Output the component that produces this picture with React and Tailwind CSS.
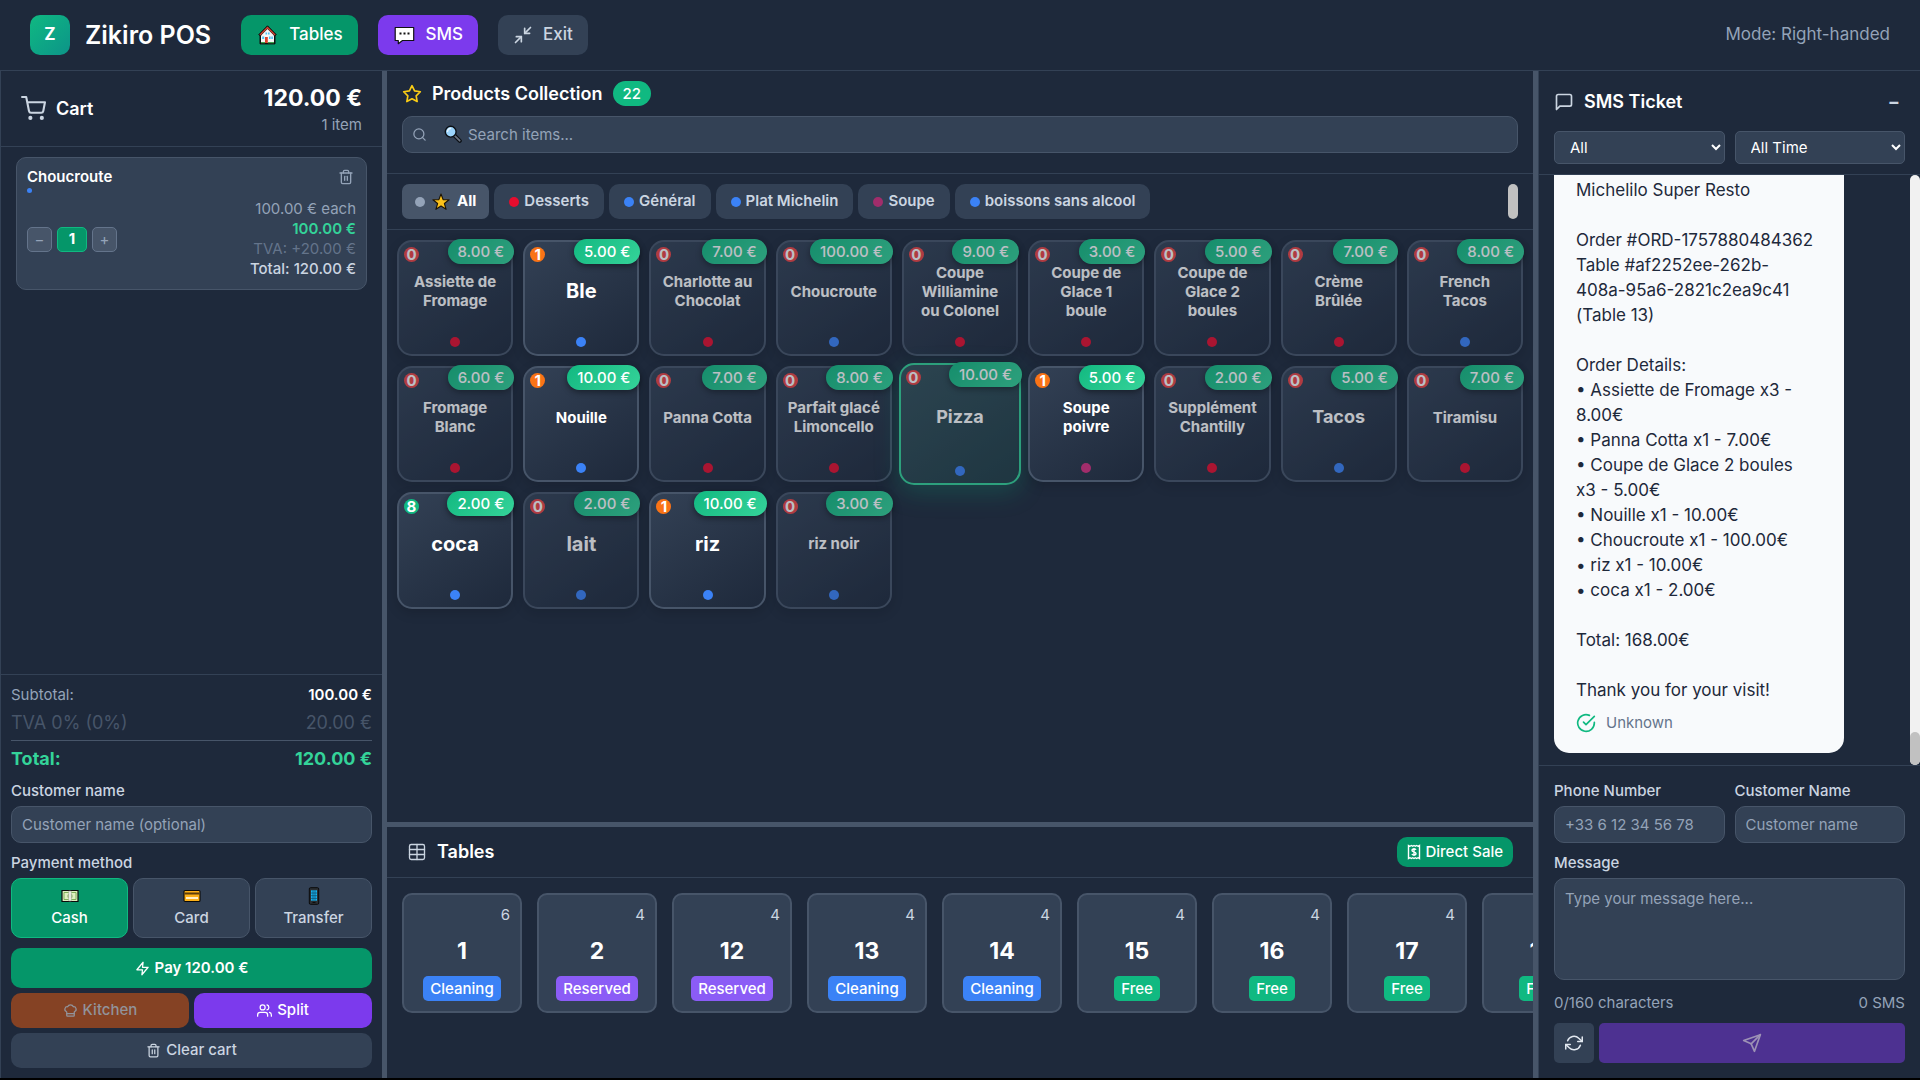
import {
  FiMinimize2, FiShoppingCart, FiTrash2, FiStar, FiSearch, FiZap, FiUsers,
  FiMessageSquare, FiCheckCircle, FiRefreshCw, FiSend,
} from 'react-icons/fi';
import { ChefHat, Table } from 'lucide-react';

const RED = 'bg-[#e60d2e]';
const BLUE = 'bg-[#3b82f6]';
const PLUM = 'bg-[#a12d6b]';

const CATEGORIES = [
  { name: 'Desserts', dot: RED },
  { name: 'Général', dot: BLUE },
  { name: 'Plat Michelin', dot: BLUE },
  { name: 'Soupe', dot: PLUM },
  { name: 'boissons sans alcool', dot: BLUE },
];

const PRODUCTS = [
  { name: 'Assiette de Fromage', price: '8.00 €', stock: 0, dot: RED },
  { name: 'Ble', price: '5.00 €', stock: 1, dot: BLUE },
  { name: 'Charlotte au Chocolat', price: '7.00 €', stock: 0, dot: RED },
  { name: 'Choucroute', price: '100.00 €', stock: 0, dot: BLUE },
  { name: 'Coupe Williamine ou Colonel', price: '9.00 €', stock: 0, dot: RED },
  { name: 'Coupe de Glace 1 boule', price: '3.00 €', stock: 0, dot: RED },
  { name: 'Coupe de Glace 2 boules', price: '5.00 €', stock: 0, dot: RED },
  { name: 'Crème Brûlée', price: '7.00 €', stock: 0, dot: RED },
  { name: 'French Tacos', price: '8.00 €', stock: 0, dot: BLUE },
  { name: 'Fromage Blanc', price: '6.00 €', stock: 0, dot: RED },
  { name: 'Nouille', price: '10.00 €', stock: 1, dot: BLUE },
  { name: 'Panna Cotta', price: '7.00 €', stock: 0, dot: RED },
  { name: 'Parfait glacé Limoncello', price: '8.00 €', stock: 0, dot: RED },
  { name: 'Pizza', price: '10.00 €', stock: 0, dot: BLUE, active: true },
  { name: 'Soupe poivre', price: '5.00 €', stock: 1, dot: PLUM },
  { name: 'Supplément Chantilly', price: '2.00 €', stock: 0, dot: RED },
  { name: 'Tacos', price: '5.00 €', stock: 0, dot: BLUE },
  { name: 'Tiramisu', price: '7.00 €', stock: 0, dot: RED },
  { name: 'coca', price: '2.00 €', stock: 8, dot: BLUE },
  { name: 'lait', price: '2.00 €', stock: 0, dot: BLUE },
  { name: 'riz', price: '10.00 €', stock: 1, dot: BLUE },
  { name: 'riz noir', price: '3.00 €', stock: 0, dot: BLUE },
];

const TABLES = [
  { number: 1, seats: 6, status: 'Cleaning' },
  { number: 2, seats: 4, status: 'Reserved' },
  { number: 12, seats: 4, status: 'Reserved' },
  { number: 13, seats: 4, status: 'Cleaning' },
  { number: 14, seats: 4, status: 'Cleaning' },
  { number: 15, seats: 4, status: 'Free' },
  { number: 16, seats: 4, status: 'Free' },
  { number: 17, seats: 4, status: 'Free' },
  { number: 18, seats: 4, status: 'Free' },
];

const STATUS_COLORS = {
  Cleaning: 'bg-[#3b82f6]',
  Reserved: 'bg-[#8b5cf6]',
  Free: 'bg-[#10b981]',
};

const TICKET = `Michelilo Super Resto

Order #ORD-1757880484362
Table #af2252ee-262b-408a-95a6-2821c2ea9c41 (Table 13)

Order Details:
• Assiette de Fromage x3 - 8.00€
• Panna Cotta x1 - 7.00€
• Coupe de Glace 2 boules x3 - 5.00€
• Nouille x1 - 10.00€
• Choucroute x1 - 100.00€
• riz x1 - 10.00€
• coca x1 - 2.00€

Total: 168.00€

Thank you for your visit!`;

const field = 'w-full rounded-[10px] border border-[#475569] bg-[#334155] px-[10px] text-[15px] placeholder:text-[#94a3b8]';
const fieldLabel = 'block text-[15px] leading-5 font-medium text-[#cbd5e1]';

/* ---------- small drawings ---------- */

function HouseIcon() {
  return (
    <svg width="23" height="20" viewBox="0 0 23 20" aria-hidden="true">
      <path d="M11.500.8 2.800 9.600l1.200 1.300v8h15v-8l1.200-1.300z" fill="#111" stroke="#111" strokeWidth="1" strokeLinejoin="round" />
      <path d="M11.500 4 5 10.500V18h13v-7.500z" fill="#f6f6f6" />
      <path d="M11.500 1.500 3.500 9.600l.9.9 7.100-7 7.100 7 .9-.9z" fill="#d8412e" />
      <path d="M9.500 7.500h1.600v2H9.500zM12 7.500h1.600v2H12zM6.200 11.500h2v2.500h-2zM13 11.500h1.600V14H13zM15.300 11.500h1.600V14h-1.600z" fill="#4cc2f1" />
      <path d="M9 12h2.800v6H9z" fill="#e0402c" />
      <path d="M5 17h4v1.300H5zM11.800 17H18v1.300h-6.200z" fill="#3fa34d" />
    </svg>
  );
}

function SpeechIcon() {
  return (
    <svg width="23" height="20" viewBox="0 0 23 20" aria-hidden="true">
      <path d="M2.200 2.500h18.500v13H9.500L5.300 18.700v-3.200H2.200z" fill="#fff" stroke="#111" strokeWidth="1.200" strokeLinejoin="round" />
      <path d="M6.500 7.500h2v2h-2zM10.500 7.500h2v2h-2zM14.500 7.500h2v2h-2z" fill="#111" />
    </svg>
  );
}

function StarEmoji() {
  return (
    <svg width="18" height="18" viewBox="0 0 18 18" aria-hidden="true">
      <path d="m9 1 2.100 5.600 6 .2-4.700 3.700 1.700 5.800L9 13l-5.100 3.300 1.700-5.800L.9 6.800l6-.2z" fill="#fcc21b" stroke="#1a1205" strokeWidth="1.100" strokeLinejoin="round" />
    </svg>
  );
}

function LensEmoji() {
  return (
    <svg width="18" height="18" viewBox="0 0 18 18" aria-hidden="true">
      <path d="m10.500 10.500 5.300 5.300" stroke="#0b0f14" strokeWidth="4" strokeLinecap="round" />
      <path d="m10.800 10.800 4.900 4.900" stroke="#6b7280" strokeWidth="1.800" strokeLinecap="round" />
      <circle cx="6.700" cy="6.700" r="5.400" fill="#9bd3fb" stroke="#0b0f14" strokeWidth="1.400" />
      <path d="M3.600 6.400a3 3 0 0 1 3-2.900" stroke="#e6f5ff" strokeWidth="1.300" fill="none" strokeLinecap="round" />
    </svg>
  );
}

function CashEmoji() {
  return (
    <svg width="18" height="18" viewBox="0 0 18 18" aria-hidden="true">
      <path d="M1 3.500h16v11H1z" fill="#dff0c0" stroke="#0a0a0a" strokeWidth="1.200" />
      <path d="M3 5.500h12v7H3z" fill="none" stroke="#7fae5a" />
      <circle cx="9" cy="9" r="2.600" fill="#8fae6e" />
      <path d="M7.700 4h2.600v10H7.700z" fill="#eef0ea" stroke="#9aa08f" strokeWidth=".5" />
    </svg>
  );
}

function CardEmoji() {
  return (
    <svg width="18" height="18" viewBox="0 0 18 18" aria-hidden="true">
      <rect x="1" y="3.500" width="16" height="11" rx="1" fill="#fcb017" stroke="#0a0a0a" strokeWidth="1.100" />
      <path d="M1.500 5.500h15v2h-15z" fill="#5b3c0b" />
      <path d="M3 10h12v2H3z" fill="#fff0c9" />
    </svg>
  );
}

function PhoneEmoji() {
  return (
    <svg width="18" height="18" viewBox="0 0 18 18" aria-hidden="true">
      <rect x="4.300" y=".7" width="9.400" height="16.600" rx="1.200" fill="#2b2f33" stroke="#0a0a0a" />
      <path d="M6 3.300h6v10.400H6z" fill="#19b5f1" />
      <path d="M8 3.300v10.400M10 3.300v10.400M6 6h6M6 8.700h6M6 11.400h6" stroke="#0d4b6b" strokeWidth=".7" />
      <path d="M7.500 15.400h3" stroke="#0a0a0a" />
    </svg>
  );
}

function ReceiptIcon() {
  return (
    <svg width="14" height="16" viewBox="0 0 14 16" fill="none" stroke="currentColor" strokeWidth="1.400" aria-hidden="true">
      <path d="M1.500 1.500 3 2.300l1.400-.8 1.300.8L7 1.500l1.300.8 1.300-.8 1.400.8 1.500-.8v13l-1.500-.8-1.400.8-1.300-.8-1.300.8-1.300-.8-1.300.8L3 13.700l-1.500.8z" />
      <path d="M9 5.800C8.700 5.200 8 5 7 5c-1.200 0-2 .5-2 1.400C5 8.400 9 7.500 9 9.500c0 1-.8 1.500-2 1.500-1 0-1.800-.3-2.100-1M7 4v8" />
    </svg>
  );
}

/* ---------- page parts ---------- */

function Header() {
  return (
    <header className="flex items-center justify-between border-b border-[#334155] px-[30px] py-[15px] text-[17px]">
      <div className="flex items-center gap-5">
        <div className="mr-[10px] flex items-center gap-[15px]">
          <div className="flex size-10 items-center justify-center rounded-[10px] bg-linear-135 from-[#10b981] to-[#0d9488] font-bold">Z</div>
          <h1 className="text-[25px] leading-8 font-semibold">Zikiro POS</h1>
        </div>
        <button className="flex h-10 items-center gap-[10px] rounded-[10px] bg-[#059669] px-[15px] font-medium">
          <HouseIcon /> Tables
        </button>
        <button className="flex h-10 items-center gap-[10px] rounded-[10px] bg-[#7c3aed] px-[15px] font-medium">
          <SpeechIcon /> SMS
        </button>
        <button className="flex h-10 items-center gap-[10px] rounded-[10px] bg-[#334155] px-[15px] font-medium text-[#cbd5e1]">
          <FiMinimize2 size={20} /> Exit
        </button>
      </div>
      <span className="text-[#94a3b8]">Mode: Right-handed</span>
    </header>
  );
}

function CartPanel() {
  return (
    <aside className="flex w-[382px] shrink-0 flex-col border-l border-[#334155]">
      <div className="flex h-[76px] shrink-0 items-center justify-between border-b border-[#334155] px-5">
        <div className="flex items-center gap-[10px]">
          <FiShoppingCart size={25} className="text-[#cbd5e1]" />
          <h2 className="text-lg font-semibold">Cart</h2>
        </div>
        <div className="pt-[5px] text-right">
          <div className="text-[23px] leading-7 font-bold">120.00 €</div>
          <div className="text-[15px] leading-[26px] text-[#94a3b8]">1 item</div>
        </div>
      </div>

      <div className="flex-1 px-[15px] py-[10px]">
        <div className="rounded-[10px] border border-[#475569] bg-[#334155] px-[10px] pt-2 pb-[10px]">
          <div className="flex items-center justify-between">
            <h3 className="text-[15px] leading-[22px] font-semibold">Choucroute</h3>
            <button aria-label="Remove" className="p-[2px] text-[#94a3b8]"><FiTrash2 size={16} /></button>
          </div>
          <div className="size-[5px] rounded-full bg-[#3b82f6]" />
          <div className="mt-[6px] flex items-center justify-between">
            <div className="flex items-center gap-[5px]">
              <button className="size-[25px] rounded-[5px] border border-[#64748b] bg-[#475569] text-[15px] leading-none text-[#94a3b8]">−</button>
              <span className="flex h-[25px] w-[30px] items-center justify-center rounded-[5px] border border-[#10b981] bg-[#059669] text-[15px] font-bold">1</span>
              <button className="size-[25px] rounded-[5px] border border-[#64748b] bg-[#475569] text-[15px] leading-none text-[#94a3b8]">+</button>
            </div>
            <div className="text-right text-[15px] leading-5">
              <div className="text-[#94a3b8]">100.00 € each</div>
              <div className="font-semibold text-[#34d399]">100.00 €</div>
              <div className="text-[#64748b]">TVA: +20.00 €</div>
              <div className="font-medium text-[#cbd5e1]">Total: 120.00 €</div>
            </div>
          </div>
        </div>
      </div>

      <div className="border-t border-[#334155] p-[10px]">
        <div className="flex h-5 items-center justify-between text-[15px]">
          <span className="text-[#94a3b8]">Subtotal:</span>
          <span className="font-semibold">100.00 €</span>
        </div>
        <div className="mt-[5px] flex h-[30px] items-start justify-between text-lg leading-[26px] text-[#475569]">
          <span>TVA 0% (0%)</span>
          <span>20.00 €</span>
        </div>
        <div className="flex h-[37px] items-center justify-between border-t border-[#475569] text-lg font-bold text-[#34d399]">
          <span>Total:</span>
          <span>120.00 €</span>
        </div>
        <label htmlFor="customer" className={`mt-1 ${fieldLabel}`}>Customer name</label>
        <input id="customer" placeholder="Customer name (optional)" className={`mt-[5px] h-[37px] ${field}`} />
        <div className={`mt-[10px] ${fieldLabel}`}>Payment method</div>
        <div className="mt-[5px] grid grid-cols-3 gap-[5px] text-[15px] leading-[22px] font-medium text-[#cbd5e1]">
          <button className="flex h-[60px] flex-col items-center justify-center gap-[2px] rounded-[10px] border border-[#10b981] bg-[#059669] text-white"><CashEmoji />Cash</button>
          <button className="flex h-[60px] flex-col items-center justify-center gap-[2px] rounded-[10px] border border-[#475569] bg-[#334155]"><CardEmoji />Card</button>
          <button className="flex h-[60px] flex-col items-center justify-center gap-[2px] rounded-[10px] border border-[#475569] bg-[#334155]"><PhoneEmoji />Transfer</button>
        </div>
        <button className="mt-[10px] flex h-10 w-full items-center justify-center gap-[5px] rounded-[10px] bg-[#059669] text-[15px] font-semibold"><FiZap size={15} />Pay 120.00 €</button>
        <div className="mt-[5px] grid grid-cols-2 gap-[5px] text-[15px] font-medium">
          <button disabled className="flex h-[35px] items-center justify-center gap-[5px] rounded-[10px] bg-[#854224] text-[#92939a]"><ChefHat size={15} />Kitchen</button>
          <button className="flex h-[35px] items-center justify-center gap-[5px] rounded-[10px] bg-[#7c3aed]"><FiUsers size={15} />Split</button>
        </div>
        <button className="mt-[5px] flex h-[35px] w-full items-center justify-center gap-[5px] rounded-[10px] bg-[#334155] text-[15px] font-medium text-[#cbd5e1]"><FiTrash2 size={15} />Clear cart</button>
      </div>
    </aside>
  );
}

function nameSize(name) {
  if (name.length <= 4) return 'text-xl leading-6';
  if (name.length === 5) return 'text-lg leading-6';
  return 'text-[15px] leading-[19px]';
}

function ProductCard({ name, price, stock, dot, active }) {
  const stockColor = stock === 0 ? 'bg-[#ef4444]' : stock < 5 ? 'bg-[#f97316]' : 'bg-[#10b981]';
  const frame = active
    ? '-m-[3px] border-[#34d399] from-[#33505a] to-[#1f3c44] shadow-[0_8px_25px_rgba(16,185,129,0.3)]'
    : 'aspect-square border-[#475569] from-[#334155] to-[#1e293b] shadow-[0_4px_12px_rgba(0,0,0,0.15)]';
  return (
    <button className={`relative flex flex-col items-center rounded-[15px] border-2 bg-linear-145 p-[7px] ${frame} ${stock === 0 ? 'opacity-70' : ''}`}>
      <span className={`absolute top-[5px] left-[5px] flex size-[15px] items-center justify-center rounded-full text-[15px] leading-none font-bold ${stockColor}`}>{stock}</span>
      <span className="absolute -top-[3px] -right-[3px] rounded-full bg-linear-135 from-[#10b981] to-[#34d399] px-[10px] text-[15px] leading-[25px] font-medium whitespace-nowrap shadow-[0_2px_6px_rgba(0,0,0,0.45)]">{price}</span>
      <span className={`flex flex-1 items-center px-[3px] pb-1 font-bold ${nameSize(name)}`}>{name}</span>
      <span className={`size-[10px] rounded-full ${dot}`} />
    </button>
  );
}

function ProductsPanel() {
  return (
    <section className="flex min-h-0 flex-1 flex-col">
      <div className="border-b border-[#334155] px-[15px] pt-[10px] pb-5">
        <div className="flex items-center gap-[10px]">
          <FiStar size={20} className="text-[#facc15]" />
          <h2 className="text-lg leading-[25px] font-semibold">Products Collection</h2>
          <span className="rounded-full bg-[#10b981] px-[10px] text-[15px] leading-[25px] font-medium">22</span>
        </div>
        <div className="relative mt-[10px]">
          <FiSearch size={15} className="absolute top-[11px] left-[10px] text-[#94a3b8]" />
          <span className="absolute top-[9px] left-[42px]"><LensEmoji /></span>
          <input aria-label="Search items" placeholder="Search items..." className="h-[37px] w-full rounded-[10px] border border-[#475569] bg-[#334155] pl-[65px] text-[15px] placeholder:text-[#94a3b8]" />
        </div>
      </div>
      <div className="flex justify-between border-b border-[#334155] px-[15px] py-[10px]">
        <div className="flex gap-[5px] text-[15px] font-semibold text-[#cbd5e1]">
          <button className="flex h-[35px] items-center gap-[7px] rounded-[7px] bg-[#475569] px-[13px] font-bold text-white">
            <span className="size-[10px] rounded-full bg-[#94a3b8]" /><StarEmoji />All
          </button>
          {CATEGORIES.map((c) => (
            <button key={c.name} className="flex h-[35px] items-center gap-[5px] rounded-[10px] bg-[#334155] px-[15px]">
              <span className={`size-[10px] rounded-full ${c.dot}`} />{c.name}
            </button>
          ))}
        </div>
        <div className="w-[10px] rounded-full bg-[#c1c1c1]" />
      </div>
      <div className="grid grid-cols-9 gap-[10px] p-[10px]">
        {PRODUCTS.map((p) => <ProductCard key={p.name} {...p} />)}
      </div>
    </section>
  );
}

function TablesPanel() {
  return (
    <section className="h-64 shrink-0 border-t-[5px] border-[#475569]">
      <div className="flex h-[51px] items-center justify-between border-b border-[#334155] px-5">
        <div className="flex items-center gap-[10px]">
          <Table size={20} strokeWidth={1.6} className="text-[#cbd5e1]" />
          <h2 className="text-lg font-semibold">Tables</h2>
        </div>
        <button className="flex h-[30px] items-center gap-[5px] rounded-[10px] bg-[#059669] px-[10px] text-[15px] font-medium"><ReceiptIcon />Direct Sale</button>
      </div>
      <div className="flex gap-[15px] overflow-hidden p-[15px]">
        {TABLES.map((t) => (
          <button key={t.number} className="relative flex size-[120px] shrink-0 flex-col items-center justify-end rounded-[10px] border-2 border-[#475569] bg-[#334155] pb-[10px]">
            <span className="absolute top-[10px] right-[10px] text-[15px] leading-5 text-[#cbd5e1]">{t.seats}</span>
            <span className="mb-[10px] text-[23px] leading-[30px] font-bold">{t.number}</span>
            <span className={`rounded-[5px] px-[7px] text-[15px] leading-[25px] font-medium ${STATUS_COLORS[t.status]}`}>{t.status}</span>
          </button>
        ))}
      </div>
    </section>
  );
}

function SmsPanel() {
  return (
    <aside className="flex w-[382px] shrink-0 flex-col border-l border-[#334155]">
      <div className="border-b border-[#334155] px-[15px] pt-4 pb-[10px]">
        <div className="flex h-[30px] items-center justify-between pr-[5px]">
          <div className="flex items-center gap-[10px]">
            <FiMessageSquare size={20} className="text-[#cbd5e1]" />
            <h2 className="text-lg font-semibold">SMS Ticket</h2>
          </div>
          <button aria-label="Collapse" className="text-lg font-bold text-[#cbd5e1]">−</button>
        </div>
        <div className="mt-[14px] grid grid-cols-2 gap-[10px] text-[15px]">
          <select aria-label="Status" className="h-[33px] rounded-[5px] border border-[#475569] bg-[#334155] px-[11px]"><option>All</option></select>
          <select aria-label="Period" className="h-[33px] rounded-[5px] border border-[#475569] bg-[#334155] px-[11px]"><option>All Time</option></select>
        </div>
      </div>

      <div className="flex min-h-0 flex-1 justify-between">
        <div className="flex min-h-0 flex-col justify-end overflow-hidden pb-3 pl-[15px]">
          <div className="w-[290px] rounded-b-[15px] bg-[#f8fafc] pt-[3px] pr-7 pb-[18px] pl-[22px]">
            <p className="text-[17px] leading-[25px] whitespace-pre-wrap text-[#1e293b]">{TICKET}</p>
            <div className="mt-2 flex items-center gap-[10px] text-[15px] leading-6 text-[#64748b]">
              <FiCheckCircle size={20} className="text-[#10b981]" />Unknown
            </div>
          </div>
        </div>
        <div className="flex w-[10px] flex-col justify-end rounded-full bg-[#f1f1f1]">
          <div className="h-[33px] rounded-full bg-[#c1c1c1]" />
        </div>
      </div>

      <div className="border-t border-[#334155] p-[15px]">
        <div className="grid grid-cols-2 gap-[10px]">
          <div>
            <label htmlFor="phone" className={fieldLabel}>Phone Number</label>
            <input id="phone" placeholder="+33 6 12 34 56 78" className={`mt-[5px] h-[37px] ${field}`} />
          </div>
          <div>
            <label htmlFor="sms-name" className={fieldLabel}>Customer Name</label>
            <input id="sms-name" placeholder="Customer name" className={`mt-[5px] h-[37px] ${field}`} />
          </div>
        </div>
        <label htmlFor="message" className={`mt-[10px] ${fieldLabel}`}>Message</label>
        <textarea id="message" placeholder="Type your message here..." className={`mt-[5px] block h-[102px] resize-none py-[10px] leading-5 ${field}`} />
        <div className="mt-[13px] flex justify-between text-[15px] leading-5 text-[#94a3b8]">
          <span>0/160 characters</span>
          <span>0 SMS</span>
        </div>
        <div className="mt-[10px] flex gap-[5px]">
          <button aria-label="Refresh" className="flex size-10 items-center justify-center rounded-[5px] bg-[#334155] text-[#e2e8f0]"><FiRefreshCw size={18} /></button>
          <button aria-label="Send" disabled className="flex h-10 flex-1 items-center justify-center rounded-[5px] bg-[#4d3191] text-[#9d92b5]"><FiSend size={20} /></button>
        </div>
      </div>
    </aside>
  );
}

export default function App() {
  return (
    <div className="h-screen bg-black pb-[2px] font-['Inter',sans-serif] text-white">
      <div className="flex h-full flex-col bg-[#1e293b]">
        <Header />
        <main className="flex min-h-0 flex-1">
          <CartPanel />
          <div className="flex min-w-0 flex-1 flex-col border-x-[5px] border-[#475569]">
            <ProductsPanel />
            <TablesPanel />
          </div>
          <SmsPanel />
        </main>
      </div>
    </div>
  );
}
